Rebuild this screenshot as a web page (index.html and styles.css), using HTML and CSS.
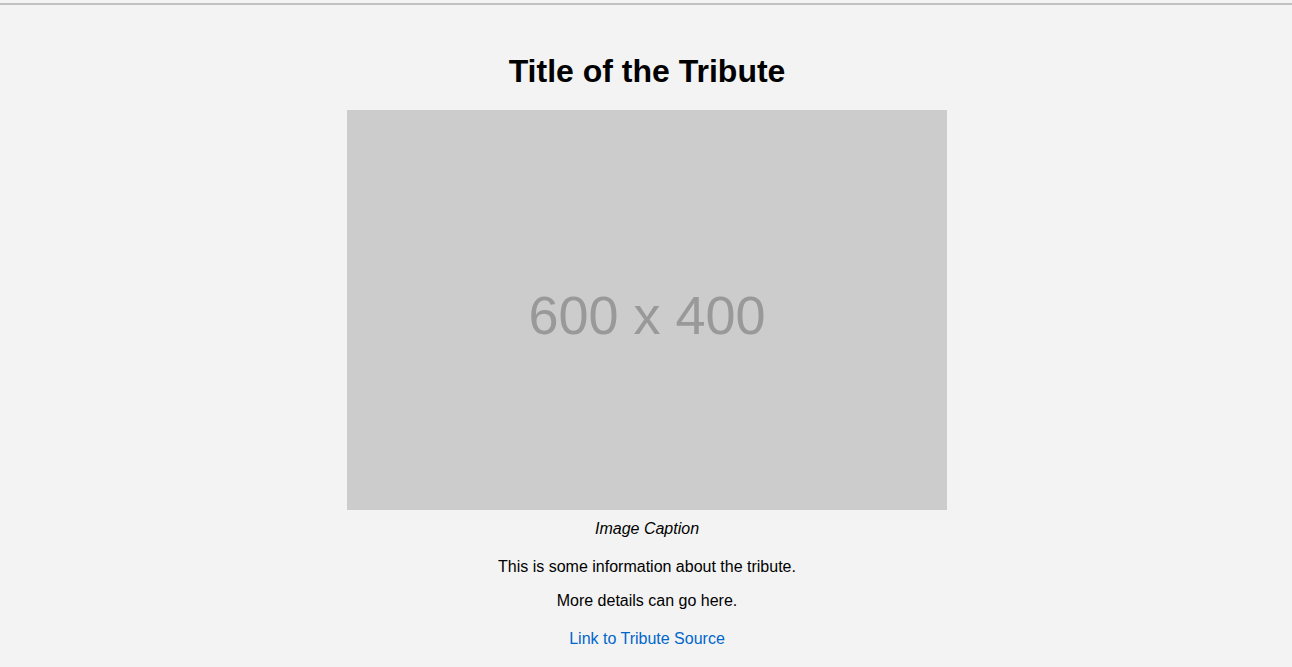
FILE: index.html
```html
<!DOCTYPE html>
<html lang="en">
<head>
<meta charset="utf-8">
<title>Tribute</title>
<link rel="stylesheet" href="styles.css">
</head>
<body>
<div class="topline"></div>
<main class="tribute">
  <h1 class="tribute-title">Title of the Tribute</h1>
  <figure class="tribute-figure">
    <div class="tribute-image"><span>600 x 400</span></div>
    <figcaption class="tribute-caption">Image Caption</figcaption>
  </figure>
  <p class="tribute-info first">This is some information about the tribute.</p>
  <p class="tribute-info">More details can go here.</p>
  <a class="tribute-link" href="#">Link to Tribute Source</a>
</main>
</body>
</html>
```
FILE: styles.css
```css
html, body {
  margin: 0;
  padding: 0;
  background: #f3f3f3;
  font-family: "Liberation Sans", Arial, sans-serif;
  color: #000;
}
.topline {
  margin-top: 3px;
  height: 2px;
  background: #c0c0c0;
}
.tribute {
  display: flex;
  flex-direction: column;
  align-items: center;
  padding-top: 47px;
  padding-left: 2px;
  text-align: center;
}
.tribute-title {
  margin: 0 0 20px;
  font-size: 32px;
  line-height: 38px;
  font-weight: bold;
}
.tribute-figure {
  margin: 0;
  display: flex;
  flex-direction: column;
  align-items: center;
}
.tribute-image {
  width: 600px;
  height: 400px;
  background: #cccccc;
  display: flex;
  align-items: center;
  justify-content: center;
  color: #999999;
  font-size: 54px;
}
.tribute-image span {
  position: relative;
  top: 5px;
}
.tribute-caption {
  margin-top: 10px;
  font-style: italic;
  font-size: 16px;
  line-height: 18px;
}
.tribute-info {
  margin: 16px 0 0;
  font-size: 16px;
  line-height: 18px;
}
.tribute-info.first {
  margin-top: 20px;
}
.tribute-link {
  margin-top: 20px;
  font-size: 16px;
  line-height: 18px;
  color: #0066cc;
  text-decoration: none;
}
```
